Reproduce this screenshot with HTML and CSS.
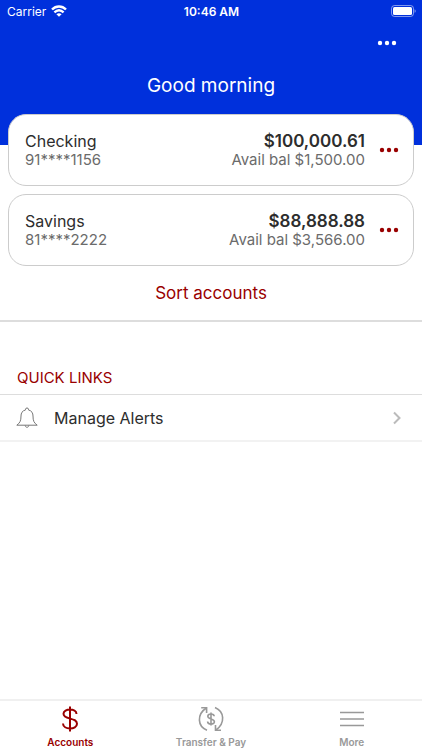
FILE: index.html
```html
<!DOCTYPE html>
<html lang="en">
<head>
    <meta charset="UTF-8">
    <meta name="viewport" content="width=device-width, initial-scale=1.0">
    <title>Accounts</title>
    <link rel="stylesheet" href="styles.css">
</head>
<body>

<header class="header">
    <div class="status-bar">
        <div class="carrier">
            <span>Carrier</span>
            <svg width="16" height="12" viewBox="0 0 16 12" fill="none" stroke="#fff" stroke-width="2.4">
                <path d="M1 4.5C5 .5 11 .5 15 4.5"/>
                <path d="M3.4 7.4C6.2 4.8 9.8 4.8 12.6 7.4"/>
                <path d="M8 11.8L5.4 9.2C7 7.8 9 7.8 10.6 9.2Z" fill="#fff" stroke="none"/>
            </svg>
        </div>
        <span class="time">10:46 AM</span>
        <svg class="battery" width="25" height="12" viewBox="0 0 25 12">
            <rect x=".5" y=".5" width="22" height="11" rx="3" fill="none" stroke="#fff" stroke-opacity=".5"/>
            <rect x="2" y="2" width="19" height="8" rx="1.5" fill="#fff"/>
            <path d="M23.6 4.2C25 4.6 25 7.4 23.6 7.8Z" fill="#fff" fill-opacity=".6"/>
        </svg>
    </div>
    <button class="dots header-menu" type="button" aria-label="Options">
        <svg width="20" height="6" viewBox="0 0 20 6" fill="currentColor"><circle cx="3" cy="3" r="2.2"/><circle cx="10" cy="3" r="2.2"/><circle cx="17" cy="3" r="2.2"/></svg>
    </button>
    <h1>Good morning</h1>
</header>

<main>
    <!-- Accounts -->
    <section class="accounts">
        <article class="card">
            <div class="account">
                <h2>Checking</h2>
                <p>91****1156</p>
            </div>
            <div class="balance">
                <strong>$100,000.61</strong>
                <p>Avail bal $1,500.00</p>
            </div>
            <button class="dots" type="button" aria-label="Checking options">
                <svg width="20" height="6" viewBox="0 0 20 6" fill="currentColor"><circle cx="3" cy="3" r="2.2"/><circle cx="10" cy="3" r="2.2"/><circle cx="17" cy="3" r="2.2"/></svg>
            </button>
        </article>
        <article class="card">
            <div class="account">
                <h2>Savings</h2>
                <p>81****2222</p>
            </div>
            <div class="balance">
                <strong>$88,888.88</strong>
                <p>Avail bal $3,566.00</p>
            </div>
            <button class="dots" type="button" aria-label="Savings options">
                <svg width="20" height="6" viewBox="0 0 20 6" fill="currentColor"><circle cx="3" cy="3" r="2.2"/><circle cx="10" cy="3" r="2.2"/><circle cx="17" cy="3" r="2.2"/></svg>
            </button>
        </article>
        <button class="sort" type="button">Sort accounts</button>
    </section>

    <!-- Quick links -->
    <section class="quick-links">
        <h2>QUICK LINKS</h2>
        <a class="link-row" href="#alerts">
            <svg width="22" height="22" viewBox="0 0 22 22" fill="none" stroke="#777" stroke-linejoin="round">
                <path d="M9.5 3V2.2C9.5.6 12.5.6 12.5 2.2V3C15.8 3.7 17 6.2 17 9C17 14 18 15.8 21.2 18.2H.8C4 15.8 5 14 5 9C5 6.2 6.2 3.7 9.5 3Z"/>
                <path d="M9.2 18.4C9.4 20.9 12.6 20.9 12.8 18.4"/>
            </svg>
            <span>Manage Alerts</span>
            <svg class="chevron" width="10" height="14" viewBox="0 0 10 14" fill="none" stroke="#bbb" stroke-width="2">
                <path d="M2 1.5L7.5 7L2 12.5"/>
            </svg>
        </a>
    </section>
</main>

<nav class="tab-bar">
    <a class="tab active" href="#accounts">
        <svg width="28" height="28" viewBox="0 0 28 28" fill="none" stroke="currentColor" stroke-width="2">
            <path d="M14 1.5V26.5M20.5 9C20.5 3 7.5 3 7.5 8.8C7.5 15.2 21 12 21 18.8C21 25.2 7 25.2 7 18.5"/>
        </svg>
        <span>Accounts</span>
    </a>
    <a class="tab" href="#transfer">
        <svg width="28" height="28" viewBox="0 0 28 28" fill="none" stroke="currentColor" stroke-width="1.6">
            <path d="M10 25.2C.5 21.5-.5 9.5 9.3 3"/>
            <path d="M4.2 2.7H9.6V8"/>
            <path d="M18 2.5C27.5 6.5 28.5 18 19 25"/>
            <path d="M24 25.3H18.5V20"/>
            <path d="M14 7.5V20.5M17.2 11.3C17 8.2 10.8 8.2 10.8 11.3C10.8 14.7 17.4 13.2 17.4 16.7C17.4 19.9 10.6 19.9 10.6 16.5"/>
        </svg>
        <span>Transfer &amp; Pay</span>
    </a>
    <a class="tab" href="#more">
        <svg width="28" height="28" viewBox="0 0 28 28" fill="none" stroke="currentColor" stroke-width="1.6">
            <path d="M2 7.5H26M2 14H26M2 20.5H26"/>
        </svg>
        <span>More</span>
    </a>
</nav>

</body>
</html>
```
FILE: styles.css
```css
* {
    box-sizing: border-box;
}
body {
    font-family: Inter, 'Liberation Sans', sans-serif;
    margin: 0;
    min-height: 100vh;
    display: flex;
    flex-direction: column;
    color: #2d2d2d;
    background: #fff;
}
h1, h2, p {
    margin: 0;
    font-weight: 400;
}
button {
    padding: 0;
    border: none;
    background: none;
    font-family: inherit;
    cursor: pointer;
}
a {
    color: inherit;
    text-decoration: none;
}
svg {
    display: block;
}
main {
    flex: 1;
}

/* Header */
.header {
    display: flex;
    flex-direction: column;
    padding-bottom: 47px;
    color: #fff;
    background: #0030dc;
}
.status-bar {
    display: grid;
    grid-template-columns: 1fr auto 1fr;
    align-items: center;
    height: 22px;
    padding: 0 6px 0 7px;
    font-size: 12px;
}
.carrier {
    display: flex;
    align-items: center;
    gap: 5px;
}
.time {
    font-weight: 600;
}
.battery {
    justify-self: end;
}
.dots {
    display: flex;
    align-items: center;
    justify-content: center;
    width: 32px;
    height: 36px;
    color: #990000;
}
.header-menu {
    align-self: flex-end;
    height: 42px;
    margin-right: 19px;
    color: #fff;
}
.header h1 {
    font-size: 19px;
    line-height: 24px;
    margin-top: 10px;
    text-align: center;
}

/* Account cards */
.accounts {
    display: flex;
    flex-direction: column;
    gap: 8px;
    margin-top: -31px;
    padding: 0 8px 8px;
    border-bottom: 2px solid #ddd;
}
.card {
    display: flex;
    align-items: center;
    padding: 16px 8px 16px 16px;
    border: 1px solid #ccc;
    border-radius: 18px;
    background: #fff;
}
.account {
    flex: 1;
}
.card h2, .card strong {
    display: block;
    font-size: 16px;
    line-height: 20px;
}
.card strong {
    font-size: 17px;
    font-weight: 600;
}
.card p {
    font-size: 15px;
    line-height: 18px;
    color: #6b6b6b;
}
.balance {
    margin-right: 8px;
    text-align: right;
}
.sort {
    align-self: center;
    height: 38px;
    font-size: 17px;
    color: #990000;
}

/* Quick links */
.quick-links {
    padding-top: 44px;
}
.quick-links h2 {
    padding: 0 17px 4px;
    font-size: 15px;
    line-height: 24px;
    color: #990000;
}
.link-row {
    display: flex;
    align-items: center;
    gap: 16px;
    height: 48px;
    padding: 0 20px 0 16px;
    border-top: 1px solid #ddd;
    border-bottom: 2px solid #f2f2f2;
    font-size: 16px;
}
.chevron {
    margin-left: auto;
}

/* Bottom tabs */
.tab-bar {
    display: grid;
    grid-template-columns: repeat(3, 1fr);
    height: 51px;
    border-top: 2px solid #f0f0f0;
}
.tab {
    display: flex;
    flex-direction: column;
    align-items: center;
    padding-top: 4px;
    gap: 2px;
    font-size: 10px;
    line-height: 14px;
    font-weight: 600;
    color: #999;
}
.active {
    color: #990000;
}
```
